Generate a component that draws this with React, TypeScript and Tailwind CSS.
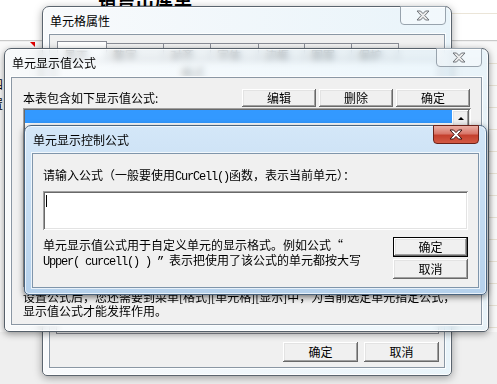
import React from "react";

const sunken =
  "shadow-[inset_1px_1px_#a0a0a0,inset_-1px_-1px_#ffffff,inset_2px_2px_#696969,inset_-2px_-2px_#e3e3e3]";
const mono = "font-['Liberation_Mono',monospace] tracking-[-1.2px]";

const tabs = [
  { label: "显示", w: "w-[50px]" },
  { label: "数字", w: "w-[58px]" },
  { label: "对齐", w: "w-[48px]" },
  { label: "字体", w: "w-[49px]" },
  { label: "边框", w: "w-[47px]" },
  { label: "图案", w: "w-[48px]" },
  { label: "保护", w: "w-[48px]" },
];

function CloseGlyph({ active }: { active?: boolean }) {
  return (
    <svg width="14" height="11" viewBox="-1 -1 14 11">
      <polygon
        points="0,0 3.5,0 6,2.6 8.5,0 12,0 7.8,4.5 12,9 8.5,9 6,6.4 3.5,9 0,9 4.2,4.5"
        fill={active ? "#ffffff" : "#ececec"}
        stroke={active ? "#3b1410" : "#6e7378"}
        strokeWidth="1"
        strokeLinejoin="round"
      />
    </svg>
  );
}

function CloseButton({ active, className }: { active?: boolean; className: string }) {
  return (
    <div
      className={`absolute flex h-[19px] w-[46px] items-center justify-center rounded-b-[4px] border ${
        active
          ? "border-[#6b2219] bg-[linear-gradient(180deg,#eab0a6_0%,#d9776a_45%,#c4402e_55%,#d35a44_100%)]"
          : "border-[#98a3ad] bg-[rgba(255,255,255,0.4)]"
      } ${className}`}
    >
      <CloseGlyph active={active} />
    </div>
  );
}

function Btn({
  children,
  className = "",
  def,
}: {
  children?: React.ReactNode;
  className?: string;
  def?: boolean;
}) {
  return (
    <div
      className={`flex items-center justify-center bg-[#f0f0f0] shadow-[inset_-1px_-1px_#696969,inset_1px_1px_#ffffff,inset_-2px_-2px_#a0a0a0,inset_2px_2px_#e3e3e3] ${
        def ? "border border-black" : ""
      } ${className}`}
    >
      {children}
    </div>
  );
}

function CellPropsWindow() {
  return (
    <div className="absolute left-[42px] top-[6px] flex h-[370px] w-[410px] flex-col rounded-t-[7px] rounded-b-[5px] border border-[#5b656f] bg-[linear-gradient(90deg,#f8fafc,#e9f4fa)] px-[6px] pb-[7px] shadow-[inset_0_0_0_1px_rgba(255,255,255,0.9),0_2px_8px_rgba(0,0,0,0.35)]">
      <div className="relative h-[27px] shrink-0 pl-[1px] pt-[7px]">
        单元格属性
        <CloseButton className="right-[-1px] top-[-1px]" />
      </div>
      <div className="flex min-h-0 flex-1 flex-col border border-[#8a97a4] bg-[#f0f0f0] pb-[5px] pl-[6px] pr-[5px] pt-[6px] shadow-[0_0_0_1px_rgba(255,255,255,0.8)]">
        <div className="flex h-[19px] shrink-0 items-end pl-[1px]">
          {tabs.map((t, i) => (
            <div
              key={t.label}
              className={`${t.w} ${
                i === 0 ? "h-[19px] bg-white" : "-ml-px h-[17px] bg-[linear-gradient(180deg,#f4f4f4,#e2e2e2)]"
              } border border-b-0 border-[#898c95] pl-[6px] pt-[4px] text-[#333]`}
            >
              {t.label}
            </div>
          ))}
        </div>
        <div className="flex-1 border border-[#898c95] bg-white">
          <div className="pl-[124px] pt-[5px] text-[#444]">格式</div>
        </div>
        <div className="mt-[8px] flex justify-end gap-[6px]">
          <Btn className="h-[20px] w-[75px]">确定</Btn>
          <Btn className="h-[20px] w-[75px]">取消</Btn>
        </div>
      </div>
    </div>
  );
}

function FormulaListWindow() {
  return (
    <div className="absolute left-[4px] top-[48px] flex h-[284px] w-[485px] flex-col rounded-t-[7px] rounded-b-[5px] border border-[#56606a] bg-[linear-gradient(90deg,rgba(246,249,251,0.6),rgba(222,240,250,0.6))] px-[6px] pb-[6px] shadow-[inset_0_0_0_1px_rgba(255,255,255,0.85),0_2px_7px_rgba(0,0,0,0.4)] backdrop-blur-[3px]">
      <div className="relative h-[28px] shrink-0 pl-[1px] pt-[7px]">
        单元显示值公式
        <CloseButton className="right-0 top-[-1px]" />
      </div>
      <div className="flex min-h-0 flex-1 flex-col border border-[#8a97a4] bg-[#f0f0f0] px-[11px] pt-[11px] shadow-[0_0_0_1px_rgba(255,255,255,0.8)]">
        <div className="flex h-[18px] items-center">
          <span>本表包含如下显示值公式:</span>
          <div className="ml-auto flex gap-[3px]">
            <Btn className="h-[18px] w-[74px]">编辑</Btn>
            <Btn className="h-[18px] w-[74px]">删除</Btn>
            <Btn className="h-[18px] w-[74px]">确定</Btn>
          </div>
        </div>
        <div className={`-mr-px mt-[1px] flex h-[179px] shrink-0 bg-white p-[2px] ${sunken}`}>
          <div className="flex-1">
            <div className="h-[13px] bg-[#3399ff]" />
          </div>
          <div className="flex w-[17px] flex-col bg-[#eaeaea]">
            <Btn className="h-[17px]">
              <div className="h-0 w-0 border-x-[3px] border-b-[3px] border-x-transparent border-b-black" />
            </Btn>
          </div>
        </div>
        <div className="mt-[3px] whitespace-nowrap leading-[14px]">
          <div>设置公式后，您还需要到菜单[格式][单元格][显示]中，为当前选定单元指定公式，</div>
          <div>显示值公式才能发挥作用。</div>
        </div>
      </div>
    </div>
  );
}

function ControlFormulaDialog() {
  return (
    <div className="absolute left-[24px] top-[125px] flex h-[170px] w-[463px] flex-col rounded-t-[7px] rounded-b-[5px] border border-[#4a6580] bg-[linear-gradient(180deg,#d4e7f8,#b5d1ec)] px-[7px] pb-[6px] shadow-[inset_0_0_0_1px_rgba(255,255,255,0.7),0_2px_6px_rgba(0,0,0,0.55)]">
      <div className="relative h-[27px] shrink-0 pl-[1px] pt-[7px]">
        单元显示控制公式
        <CloseButton active className="right-0 top-[-1px]" />
      </div>
      <div className="flex min-h-0 flex-1 flex-col border border-[#7f95ab] bg-[#f0f0f0] px-[10px] pt-[14px] shadow-[0_0_0_1px_rgba(255,255,255,0.7)]">
        <div className="whitespace-nowrap">
          请输入公式（一般要使用<span className={mono}>CurCell()</span>函数，表示当前单元）：
        </div>
        <div className={`relative mt-[7px] h-[39px] shrink-0 bg-white ${sunken}`}>
          <div className="absolute left-[3px] top-[4px] h-[12px] w-px bg-black" />
        </div>
        <div className="mt-[7px] flex justify-between">
          <div className="whitespace-nowrap leading-[15px]">
            <div>单元显示值公式用于自定义单元的显示格式。例如公式“</div>
            <div>
              <span className={mono}>Upper( curcell() ) ” </span>表示把使用了该公式的单元都按大写
            </div>
          </div>
          <div className="flex w-[75px] flex-col gap-[2px]">
            <Btn def className="h-[20px]">
              确定
            </Btn>
            <Btn className="h-[20px]">取消</Btn>
          </div>
        </div>
      </div>
    </div>
  );
}

export default function App() {
  return (
    <div className="relative h-[384px] w-[497px] overflow-hidden bg-[#efefef] font-['Noto_Sans_CJK_SC',sans-serif] text-[12px] leading-[14px] text-black">
      {/* spreadsheet behind the dialogs */}
      <div className="absolute inset-x-0 top-0 h-[41px] border-b border-[#c9c9c9] bg-white" />
      <div className="absolute right-0 top-[13px] h-px w-[45px] bg-[#ebe5d8]" />
      <div className="absolute right-0 top-[42px] h-[290px] w-[45px] bg-[repeating-linear-gradient(180deg,#f8f8f8_0px,#f8f8f8_21px,#e7e1d3_21px,#e7e1d3_22px)]" />
      <div className="absolute left-0 top-[42px] h-[290px] w-[42px] bg-[#f9f9f9]" />
      <div className="absolute left-[30px] top-[42px] h-0 w-0 border-l-[5px] border-t-[5px] border-l-transparent border-t-[#e00000]" />
      <span className="absolute left-[-9px] top-[77px]">四</span>
      <span className="absolute left-[-9px] top-[97px]">置</span>
      <span className="absolute left-[98px] top-[-10px] text-[18px] font-bold leading-[18px] tracking-[1px]">
        销售出库单
      </span>

      <CellPropsWindow />
      <FormulaListWindow />
      <ControlFormulaDialog />
    </div>
  );
}
